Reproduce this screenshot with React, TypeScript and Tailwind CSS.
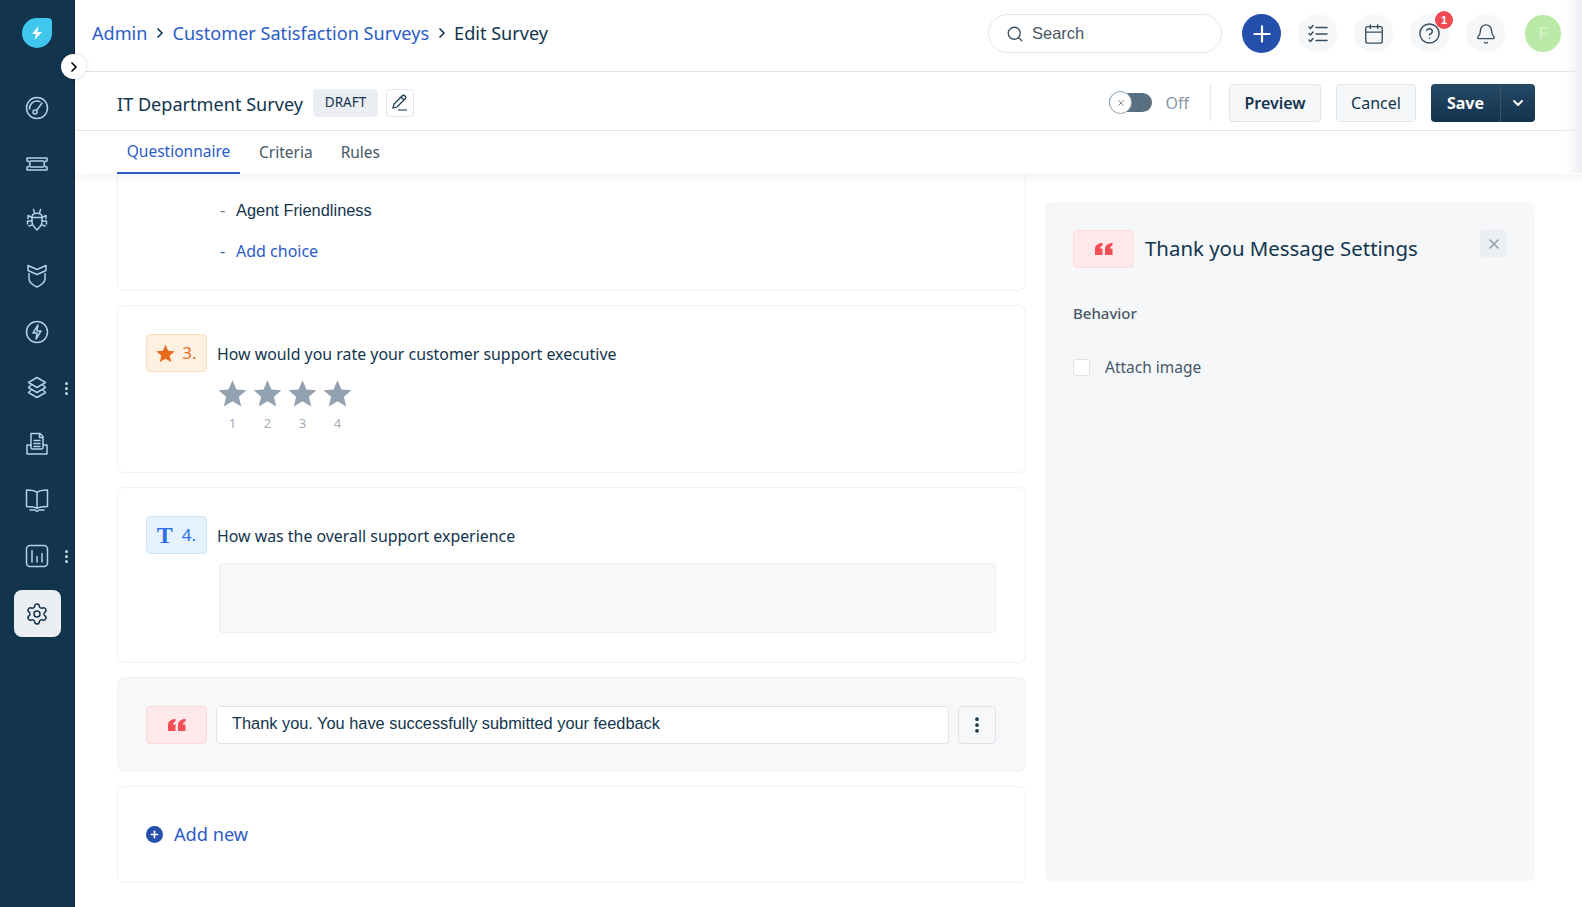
import { Bell, Calendar, ChevronDown, ChevronRight, CircleHelp, MoreVertical, Plus, Search, Settings, X } from "lucide-react";
import type { ReactNode } from "react";

const NOTO = "font-['Noto_Sans',sans-serif]";
const ARIAL = "font-['Liberation_Sans',sans-serif]";

const stroke = {
  fill: "none",
  stroke: "currentColor",
  strokeWidth: 1.5,
  strokeLinecap: "round" as const,
  strokeLinejoin: "round" as const,
};

function Icon({ children }: { children: ReactNode }) {
  return (
    <svg width="24" height="24" viewBox="0 0 24 24" {...stroke}>
      {children}
    </svg>
  );
}

// sharp five-point star, the lucide one has rounded tips
function SharpStar({ size, color }: { size: number; color: string }) {
  return (
    <svg width={size} height={size} viewBox="0 0 24 24" fill={color}>
      <path d="M12 1l3.300 7.600 8.200.7-6.200 5.400 1.900 8.100L12 18.500 4.800 22.800l1.900-8.100L.5 9.300l8.200-.7z" />
    </svg>
  );
}

const NAV = [
  {
    key: "dashboard",
    icon: (
      <Icon>
        <circle cx="12" cy="12" r="10.500" />
        <path d="M4.500 13a7.500 7.500 0 0 1 7.500-8 7.500 7.500 0 0 1 3 .6" />
        <circle cx="10" cy="16" r="2" />
        <path d="M11.500 14.500L17 7" />
      </Icon>
    ),
  },
  {
    key: "tickets",
    icon: (
      <Icon>
        <path d="M2 6h20v3a3 3 0 0 0 0 6v3H2v-3a3 3 0 0 0 0-6z" />
        <path d="M5.500 9h13M5.500 15h13" />
      </Icon>
    ),
  },
  {
    key: "problems",
    icon: (
      <Icon>
        <path d="M8.500 1.500l1 3.500M15.500 1.500l-1 3.500" />
        <path d="M7 9c0-5 10-5 10 0v5c0 3-3 6-5 8-2-2-5-5-5-8z" />
        <path d="M7 9.500h10M7 9.500L3 7.500v3M17 9.500l4-2v3M7 13H2.500v3M17 13h4.500v3M7 17l-3 1M17 17l3 1" />
      </Icon>
    ),
  },
  {
    key: "changes",
    icon: (
      <Icon>
        <path d="M3 1.500l9 4 9-4v5l-9 4-9-4z" />
        <path d="M4 9.500V15c0 3 4 6.500 8 8 4-1.500 8-5 8-8V9.500" />
      </Icon>
    ),
  },
  {
    key: "releases",
    icon: (
      <Icon>
        <circle cx="12" cy="12" r="10.500" />
        <path d="M13 5l-5 8h4l-1 6 5-8h-4z" />
      </Icon>
    ),
  },
  {
    key: "assets",
    dots: true,
    icon: (
      <Icon>
        <path d="M12 1.500l8.500 5-8.500 5-8.500-5z" />
        <path d="M6 9l-2.500 2.500 8.500 5 8.500-5L18 9" />
        <path d="M6 14l-2.500 2.500 8.500 5 8.500-5L18 14" />
      </Icon>
    ),
  },
  {
    key: "documents",
    icon: (
      <Icon>
        <path d="M6 13V1.500h9l3 3V13" />
        <path d="M14.500 1.500v4h3.500M9 8.500h6M9 11.500h6M9 14.500h6" />
        <path d="M6 13H2v9h20v-9h-4v2.500a1.500 1.500 0 0 1-1.500 1.500h-9A1.500 1.500 0 0 1 6 15.500z" />
      </Icon>
    ),
  },
  {
    key: "solutions",
    icon: (
      <Icon>
        <path d="M12 4.500C10 2.500 6 2 1.500 2v16.500c4.500 0 8.500.5 10.500 2 2-1.500 6-2 10.500-2V2C18 2 14 2.500 12 4.500zM12 4.500v16" />
        <path d="M5 22h5l2 1.500 2-1.500h5" />
      </Icon>
    ),
  },
  {
    key: "analytics",
    dots: true,
    icon: (
      <Icon>
        <rect x="1.500" y="1.500" width="21" height="21" rx="3.500" />
        <path d="M7 6.500V18M12 12.500V18M17 9.500V18" />
      </Icon>
    ),
  },
];

function Sidebar() {
  return (
    <aside className="relative flex w-[75px] shrink-0 flex-col items-center border-r border-[#0d1f55] bg-[#12344d] text-[#b5d0e8]">
      <div className="flex h-[80px] w-full items-start justify-center pt-[18px]">
        <div className="flex h-[30px] w-[30px] items-center justify-center rounded-[50%] rounded-tr-[4px] bg-[#3fc7ee]">
          <svg width="16" height="16" viewBox="0 0 16 16" fill="#ffffff">
            <path d="M9.500 1L3 9h4l-1.500 6L13 7H8.500z" />
          </svg>
        </div>
      </div>
      {NAV.map((item) => (
        <div key={item.key} className="relative flex h-[56px] w-full items-center justify-center">
          {item.icon}
          {item.dots && (
            <span className="absolute right-[6px] flex flex-col gap-[2px]">
              <span className="h-[3px] w-[3px] rounded-full bg-[#c5d7e6]" />
              <span className="h-[3px] w-[3px] rounded-full bg-[#c5d7e6]" />
              <span className="h-[3px] w-[3px] rounded-full bg-[#c5d7e6]" />
            </span>
          )}
        </div>
      ))}
      <div className="mt-[6px] flex h-[47px] w-[47px] items-center justify-center rounded-[8px] bg-[#ebeff3] text-[#12344d]">
        <Settings size={24} strokeWidth={1.5} />
      </div>
      <button className="absolute right-[-12px] top-[54px] z-20 flex h-[25px] w-[25px] items-center justify-center rounded-full bg-white text-black shadow-[0_0_4px_rgba(18,52,77,0.2)]">
        <ChevronRight size={16} strokeWidth={2.5} />
      </button>
    </aside>
  );
}

function HeaderCircle({ children }: { children: ReactNode }) {
  return (
    <div className="relative flex h-[39px] w-[39px] items-center justify-center rounded-full bg-[#f5f7f9] text-[#384f60]">
      {children}
    </div>
  );
}

function TopBar() {
  return (
    <header className={`flex h-[72px] shrink-0 items-center border-b border-[#dfe3e8] pb-[4px] pl-[17px] pr-[21px] ${NOTO}`}>
      <nav className="flex items-center text-[18.1px] text-[#2c5cc5]">
        <span>Admin</span>
        <ChevronRight size={16} strokeWidth={2.5} className="mx-[4.5px] text-[#12344d]" />
        <span>Customer Satisfaction Surveys</span>
        <ChevronRight size={16} strokeWidth={2.5} className="mx-[4.5px] text-[#12344d]" />
        <span className="text-[#12344d]">Edit Survey</span>
      </nav>
      <div className="ml-auto flex items-center">
        <div className={`flex h-[39px] w-[234px] items-center gap-[8px] rounded-full border border-[#dfe5ec] pl-[17px] text-[16.5px] text-[#475867] ${ARIAL}`}>
          <Search size={18} strokeWidth={1.75} className="text-[#384f60]" />
          Search
        </div>
        <div className="ml-[20px] flex h-[39px] w-[39px] items-center justify-center rounded-full bg-[#2450ab] text-white">
          <Plus size={26} strokeWidth={2} />
        </div>
        <div className="ml-[17px] flex items-center gap-[17px]">
          <HeaderCircle>
            <svg width="22" height="22" viewBox="0 0 22 22" {...stroke}>
              <path d="M2 4l1.500 1.500L6 2.500M2 10.500L3.500 12 6 9M2 17l1.500 1.500L6 15.500" />
              <path d="M9 4.500h11M9 11h11M9 17.500h11" />
            </svg>
          </HeaderCircle>
          <HeaderCircle>
            <Calendar size={22} strokeWidth={1.5} />
          </HeaderCircle>
          <HeaderCircle>
            <CircleHelp size={23} strokeWidth={1.5} />
            <span className={`absolute right-[-4px] top-[-3px] flex h-[18px] w-[18px] items-center justify-center rounded-full bg-[#f04b50] text-[11px] font-bold text-white ${ARIAL}`}>
              1
            </span>
          </HeaderCircle>
          <HeaderCircle>
            <Bell size={22} strokeWidth={1.5} />
          </HeaderCircle>
        </div>
        <div className="ml-[20px] flex h-[37px] w-[36px] items-center justify-center rounded-full bg-[#b9eaa8] text-[18px] text-[#d8f3cd]">
          F
        </div>
      </div>
    </header>
  );
}

function SurveyBar() {
  return (
    <div className={`flex h-[59px] shrink-0 items-center border-b border-[#e6eaef] pl-[42px] pr-[47px] pt-[3px] ${NOTO}`}>
      <span className="mt-[4px] text-[18.1px] text-[#12344d]">IT Department Survey</span>
      <span className="ml-[10px] flex h-[28px] w-[65px] items-center justify-center rounded-[4px] bg-[#ebeff3] text-[13.5px] text-[#12344d]">
        DRAFT
      </span>
      <button className="ml-[8px] flex h-[28px] w-[28px] items-center justify-center rounded-[4px] border border-[#e2e7ec] text-[#12344d]">
        <svg width="18" height="18" viewBox="0 0 18 18" fill="none" stroke="currentColor" strokeWidth="1.2">
          <path d="M2 14l1-4 8-8c1-1 2-1 3 0s1 2 0 3l-8 8zM10 3l3 3M7 16h9" />
        </svg>
      </button>
      <div className="ml-auto flex items-center">
        <div className="relative h-[19px] w-[43px] rounded-full bg-[#5a7080]">
          <span className="absolute left-0 top-[-2px] flex h-[23px] w-[23px] items-center justify-center rounded-full border border-[#8fa3b3] bg-white text-[#6f7c87]">
            <X size={10} strokeWidth={2} />
          </span>
        </div>
        <span className="ml-[13px] text-[16px] text-[#8b98a3]">Off</span>
        <span className="ml-[21px] h-[38px] w-px bg-[#e6eaef]" />
        <button className="ml-[18px] flex h-[38px] w-[92px] items-center justify-center rounded-[4px] border border-[#dfe5ec] bg-[#f5f7f9] text-[16px] font-semibold text-[#12344d]">
          Preview
        </button>
        <button className="ml-[15px] flex h-[38px] w-[80px] items-center justify-center rounded-[4px] border border-[#dfe5ec] bg-[#f5f7f9] text-[16px] text-[#12344d]">
          Cancel
        </button>
        <div className="ml-[15px] flex h-[38px] w-[104px] overflow-hidden rounded-[4px] bg-gradient-to-b from-[#264966] to-[#12344d] text-white">
          <span className="flex w-[70px] items-center justify-center border-r border-[#35536b] text-[16px] font-bold">
            Save
          </span>
          <span className="flex flex-1 items-center justify-center">
            <ChevronDown size={16} strokeWidth={3} />
          </span>
        </div>
      </div>
    </div>
  );
}

function Tabs() {
  return (
    <div className={`relative z-10 flex h-[43px] shrink-0 items-stretch pl-[42px] text-[15.5px] text-[#475867] shadow-[0_4px_8px_rgba(18,52,77,0.06)] ${NOTO}`}>
      <span className="flex w-[123px] items-center justify-center border-b-2 border-[#2c5cc5] text-[#2c5cc5]">
        Questionnaire
      </span>
      <span className="ml-[19px] flex items-center">Criteria</span>
      <span className="ml-[28px] flex items-center">Rules</span>
    </div>
  );
}

function Card({ className, children }: { className: string; children: ReactNode }) {
  return <section className={`rounded-[8px] border border-[#f0f2f5] ${className}`}>{children}</section>;
}

function TypeBadge({ className, children }: { className: string; children: ReactNode }) {
  return (
    <span className={`flex h-[38px] w-[61px] shrink-0 items-center justify-center gap-[7px] rounded-[4px] border ${className}`}>
      {children}
    </span>
  );
}

function QuoteMark() {
  return (
    <svg width="18" height="14" viewBox="0 0 18 14" fill="#f25056">
      <path d="M7.500 1v2.500C6 4 5 5 5 6.500h2.500V13H0V7C0 3.500 3 1 7.500 1zM17.500 1v2.500C16 4 15 5 15 6.500h2.500V13H10V7c0-3.500 3-6 7.500-6z" />
    </svg>
  );
}

function Questions() {
  return (
    <div className="flex w-[909px] shrink-0 flex-col gap-[14px]">
      <Card className="h-[117px] rounded-t-none border-t-0 pl-[102px] pt-[24px] text-[16.4px]">
        <div className={`flex items-center text-[#12344d] ${ARIAL}`}>
          <span className="w-[16px] text-[#6f7c87]">-</span>
          Agent Friendliness
        </div>
        <div className={`mt-[16px] flex items-center text-[16px] text-[#2c5cc5] ${NOTO}`}>
          <span className="w-[16px]">-</span>
          Add choice
        </div>
      </Card>

      <Card className="h-[168px] px-[28px] pt-[28px]">
        <div className="flex items-center gap-[10px]">
          <TypeBadge className="border-[#ffdcbc] bg-[#fef1e1] text-[#e86a1c]">
            <SharpStar size={19} color="#e86a1c" />
            <span className="text-[17px]">3.</span>
          </TypeBadge>
          <span className="mt-[3px] text-[15.9px] text-[#12344d]">How would you rate your customer support executive</span>
        </div>
        <div className="ml-[69px] mt-[7px] flex">
          {["1", "2", "3", "4"].map((n) => (
            <div key={n} className="flex w-[35px] flex-col items-center">
              <SharpStar size={29} color="#92a2b1" />
              <span className="mt-[6px] text-[13px] text-[#a3adb8]">{n}</span>
            </div>
          ))}
        </div>
      </Card>

      <Card className="h-[176px] pl-[28px] pr-[29px] pt-[28px]">
        <div className="flex items-center gap-[10px]">
          <TypeBadge className="gap-[9px] border-[#cfe3fb] bg-[#e5f2fd] text-[#2c6fe8]">
            <span className="font-['Liberation_Serif',serif] text-[24px] font-bold leading-none">T</span>
            <span className="text-[17px]">4.</span>
          </TypeBadge>
          <span className="mt-[3px] text-[15.9px] text-[#12344d]">How was the overall support experience</span>
        </div>
        <div className="ml-[73px] mt-[9px] h-[70px] rounded-[4px] border border-[#ebeff3] bg-[#f7f8fa]" />
      </Card>

      <Card className="flex h-[95px] items-center gap-[9px] bg-[#f7f8fa] pl-[28px]">
        <TypeBadge className="border-[#fdd7da] bg-[#ffe9eb]">
          <QuoteMark />
        </TypeBadge>
        <div className={`flex h-[38px] w-[733px] items-center rounded-[4px] border border-[#dfe3e8] bg-white pb-[2px] pl-[15px] text-[16.35px] text-[#12344d] ${ARIAL}`}>
          Thank you. You have successfully submitted your feedback
        </div>
        <button className="flex h-[38px] w-[38px] items-center justify-center rounded-[4px] border border-[#dfe3e8] bg-[#f7f8fa] text-[#12344d]">
          <MoreVertical size={20} strokeWidth={2.5} />
        </button>
      </Card>

      <Card className="flex h-[97px] items-center gap-[11px] px-[28px] text-[#2c5cc5]">
        <span className="flex h-[17px] w-[17px] items-center justify-center rounded-full bg-[#2450ab] text-white">
          <Plus size={11} strokeWidth={3.5} />
        </span>
        <span className="text-[18.2px]">Add new</span>
      </Card>
    </div>
  );
}

function SettingsPanel() {
  return (
    <aside className="flex h-[680px] w-[490px] shrink-0 flex-col rounded-[8px] bg-[#f5f7f9] px-[28px] pt-[28px]">
      <div className="flex items-start">
        <TypeBadge className="border-[#fddde0] bg-[#ffe9eb]">
          <QuoteMark />
        </TypeBadge>
        <span className="ml-[11px] mt-[3px] text-[20.4px] text-[#12344d]">Thank you Message Settings</span>
        <button className="ml-auto flex h-[27px] w-[27px] items-center justify-center rounded-[4px] bg-[#ebeff3] text-[#92a2b1]">
          <X size={16} strokeWidth={2.5} />
        </button>
      </div>
      <p className="mt-[34px] text-[15px] font-medium text-[#475867]">Behavior</p>
      <label className="mt-[31px] flex items-center gap-[15px] text-[15.5px] text-[#475867]">
        <span className="h-[17px] w-[17px] rounded-[3px] border border-[#dfe3e8] bg-white" />
        Attach image
      </label>
    </aside>
  );
}

export default function App() {
  return (
    <div className={`relative flex h-[907px] w-[1582px] overflow-hidden bg-white ${NOTO}`}>
      <Sidebar />
      <div className="flex min-w-0 flex-1 flex-col">
        <TopBar />
        <SurveyBar />
        <Tabs />
        <main className="flex min-h-0 flex-1 items-start gap-[19px] overflow-hidden pl-[42px]">
          <Questions />
          <div className="pt-[28px]">
            <SettingsPanel />
          </div>
        </main>
      </div>
      {/* faint shade along the right edge of the header rows */}
      <div className="pointer-events-none absolute right-0 top-0 z-20 h-[173px] w-[16px] bg-gradient-to-r from-transparent to-[#eceef1]" />
    </div>
  );
}
